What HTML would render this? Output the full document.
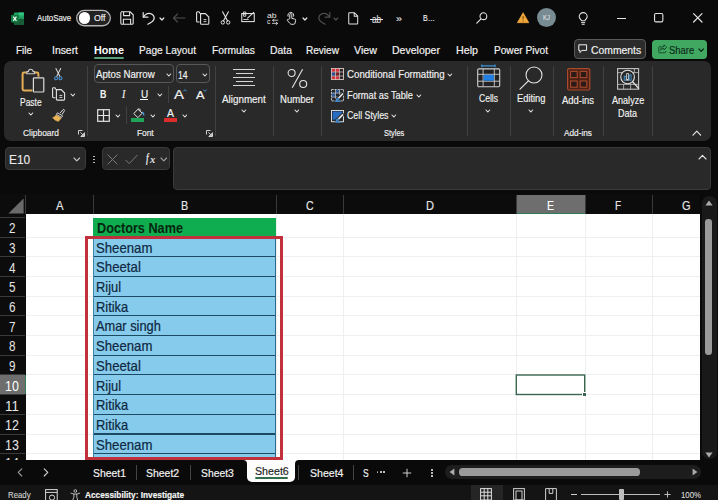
<!DOCTYPE html>
<html lang="en"><head><meta charset="utf-8"><title>Excel</title>
<style>
html,body{margin:0;padding:0;}
body{width:718px;height:500px;overflow:hidden;position:relative;background:#0a0a0a;font-family:"Liberation Sans",sans-serif;}
.t{position:absolute;white-space:nowrap;transform-origin:0 50%;display:block;}
.b{position:absolute;box-sizing:border-box;}
.i{position:absolute;overflow:visible;}
</style></head><body>
<div class="titlebar">
<svg class="i" style="left:10.9px;top:11.6px;" width="13.4" height="13.4" viewBox="0 0 14 14"><rect x="3" y="0.5" width="10.5" height="13" rx="1.2" fill="#21a366"/>
<rect x="8.2" y="0.5" width="5.3" height="3.3" fill="#33c481"/><rect x="8.2" y="3.8" width="5.3" height="3.2" fill="#21a366"/>
<rect x="3" y="3.8" width="5.2" height="3.2" fill="#107c41"/><rect x="3" y="7" width="10.5" height="6.5" rx="1.2" fill="#185c37"/>
<rect x="0" y="3" width="8" height="8" rx="1" fill="#107c41"/>
<path d="M2.3 4.8 L5.7 9.2 M5.7 4.8 L2.3 9.2" stroke="#fff" stroke-width="1.2" fill="none"/></svg>
<span class="t " style="left:36.80px;top:12.70px;font-size:8.8px;line-height:11px;color:#f2f2f2;transform:scaleX(0.8965) rotate(0.02deg);-webkit-text-stroke:0.14px #f2f2f2;">AutoSave</span>
<svg class="i" style="left:75px;top:9px;" width="37" height="18.4" viewBox="0 0 37 18.4"><rect x="1.65" y="1.45" width="33.7" height="15.3" rx="7.65" fill="#222" stroke="#b4b4b4" stroke-width="1.3"/></svg>
<div class="b " style="left:78.8px;top:12.4px;width:11.4px;height:11.4px;background:#fff;border-radius:50%;"></div>
<span class="t " style="left:93.80px;top:12.70px;font-size:8.8px;line-height:11px;color:#f2f2f2;transform:scaleX(0.9986) rotate(0.02deg);-webkit-text-stroke:0.14px #f2f2f2;">Off</span>
<svg class="i" style="left:120px;top:11px;" width="14" height="14" viewBox="0 0 14 14"><path d="M1.5 0.8 H10.2 L13.2 3.8 V12 a1.2 1.2 0 0 1 -1.2 1.2 H1.8 A1.2 1.2 0 0 1 0.8 12 V1.8 Z" fill="none" stroke="#e4e4e4" stroke-width="1.1"/><path d="M3.6 1 V4.6 H9.6 V1" fill="none" stroke="#e4e4e4" stroke-width="1.1"/><path d="M3.4 13 V8.2 H10.6 V13" fill="none" stroke="#e4e4e4" stroke-width="1.1"/></svg>
<svg class="i" style="left:142px;top:11px;" width="14" height="14" viewBox="0 0 14 14"><path d="M1.2 1.5 V6.2 H5.9" fill="none" stroke="#e4e4e4" stroke-width="1.2" stroke-linecap="round" stroke-linejoin="round"/><path d="M1.6 6 C3.2 3.2 6 2 8.6 2.6 C11.4 3.3 12.8 6 11.8 8.4 C11 10.4 8.6 11.8 5.8 13.2" fill="none" stroke="#e4e4e4" stroke-width="1.2" stroke-linecap="round"/></svg>
<svg class="i" style="left:159.3px;top:16.6px;" width="5.8" height="4" viewBox="0 0 5.8 4"><path d="M1 1 L2.9 3 L4.8 1" fill="none" stroke="#e6e6e6" stroke-width="1.2" stroke-linecap="round" stroke-linejoin="round"/></svg>
<svg class="i" style="left:172px;top:13px;" width="14" height="10" viewBox="0 0 14 10"><path d="M13 5 H1.5 M5.5 1 L1.5 5 L5.5 9" fill="none" stroke="#4e4e4e" stroke-width="1.1" stroke-linecap="round" stroke-linejoin="round"/></svg>
<svg class="i" style="left:196px;top:11px;" width="14" height="14" viewBox="0 0 14 14"><path d="M3.6 2.6 V1.8 a1 1 0 0 0 -1 -1 H1.6 a1 1 0 0 0 -1 1 V10 a1 1 0 0 0 1 1 H3.6" fill="none" stroke="#e4e4e4" stroke-width="1.1"/><path d="M4.6 2.6 H9.4 L12.8 6 V12.4 a0.9 0.9 0 0 1 -0.9 0.9 H5.5 a0.9 0.9 0 0 1 -0.9 -0.9 Z" fill="none" stroke="#e4e4e4" stroke-width="1.1"/><path d="M7.6 8.6 H10.4 M7.6 10.6 H10.4" stroke="#e4e4e4" stroke-width="0.9"/></svg>
<svg class="i" style="left:220px;top:11px;" width="11" height="14" viewBox="0 0 11 14"><path d="M2.6 0.8 L7.6 10 M8.4 0.8 L3.4 10" stroke="#e4e4e4" stroke-width="1.1" fill="none" stroke-linecap="round"/><circle cx="2.8" cy="11.4" r="1.7" fill="none" stroke="#e4e4e4" stroke-width="1"/><circle cx="8.2" cy="11.4" r="1.7" fill="none" stroke="#e4e4e4" stroke-width="1"/></svg>
<svg class="i" style="left:241.4px;top:11.4px;" width="14.4" height="11.6" viewBox="0 0 15 12"><rect x="0.8" y="2.6" width="13" height="8.4" fill="none" stroke="#e4e4e4" stroke-width="1.1"/><path d="M6.5 7.6 L13.6 1.2" stroke="#e4e4e4" stroke-width="1.1"/><path d="M2.6 1 H5 V5.4 H2.6 Z M2.6 3.2 H5" fill="none" stroke="#e4e4e4" stroke-width="0.9"/><path d="M2.4 8.8 H8" stroke="#e4e4e4" stroke-width="0.9"/></svg>
<span class="t " style="left:266.80px;top:11.70px;font-size:7px;line-height:8px;color:#e4e4e4;transform:scaleX(1.2355) rotate(0.02deg);">ab</span>
<span class="t " style="left:267.20px;top:17.65px;font-size:7px;line-height:8px;color:#e4e4e4;transform:scaleX(0.9714) rotate(0.02deg);">c</span>
<svg class="i" style="left:270.5px;top:18.5px;" width="8" height="6" viewBox="0 0 8 6"><path d="M7.2 1.2 H1.6 M3.4 0 L1.4 1.4 L3.4 2.8 M1 4.4 H6.4 M4.8 3 L6.8 4.4 L4.8 5.8" fill="none" stroke="#e4e4e4" stroke-width="0.8"/></svg>
<svg class="i" style="left:285px;top:11px;" width="12" height="14" viewBox="0 0 12 14"><path d="M4.8 7.6 V3.6 a1 1 0 0 1 2 0 V7.4 L9.6 8 a1.2 1.2 0 0 1 1 1.4 L10 12.2 a1.4 1.4 0 0 1 -1.4 1.1 H6.6 a2 2 0 0 1 -1.6 -0.8 L2.4 9.6 a0.9 0.9 0 0 1 1.3 -1.2 Z" fill="none" stroke="#e4e4e4" stroke-width="1"/><path d="M3.2 5.6 a2.9 2.9 0 1 1 5.2 0" fill="none" stroke="#e4e4e4" stroke-width="1"/></svg>
<svg class="i" style="left:302.3px;top:16.6px;" width="5.8" height="4" viewBox="0 0 5.8 4"><path d="M1 1 L2.9 3 L4.8 1" fill="none" stroke="#e6e6e6" stroke-width="1.2" stroke-linecap="round" stroke-linejoin="round"/></svg>
<svg class="i" style="left:317px;top:11px;" width="14" height="14" viewBox="0 0 14 14"><path d="M12.8 1.5 V6.2 H8.1" fill="none" stroke="#4e4e4e" stroke-width="1.2" stroke-linecap="round" stroke-linejoin="round"/><path d="M12.4 6 C10.8 3.2 8 2 5.4 2.6 C2.6 3.3 1.2 6 2.2 8.4 C3 10.4 5.4 11.8 8.2 13.2" fill="none" stroke="#4e4e4e" stroke-width="1.2" stroke-linecap="round"/></svg>
<svg class="i" style="left:333.4px;top:16.6px;" width="5.8" height="4" viewBox="0 0 5.8 4"><path d="M1 1 L2.9 3 L4.8 1" fill="none" stroke="#4e4e4e" stroke-width="1.2" stroke-linecap="round" stroke-linejoin="round"/></svg>
<svg class="i" style="left:348.2px;top:12.2px;" width="11" height="12.8" viewBox="0 0 12 14"><path d="M1.6 0.8 H7 L10.6 4.4 V12.4 a0.8 0.8 0 0 1 -0.8 0.8 H1.6 a0.8 0.8 0 0 1 -0.8 -0.8 V1.6 a0.8 0.8 0 0 1 0.8 -0.8 Z M6.8 1 V4.6 H10.4" fill="none" stroke="#e4e4e4" stroke-width="1.1"/></svg>
<span class="t " style="left:371.80px;top:13.50px;font-size:10.4px;line-height:12px;color:#e4e4e4;transform:scaleX(0.7970) rotate(0.02deg);-webkit-text-stroke:0.1px #e4e4e4;">ab</span>
<div class="b " style="left:370px;top:18.9px;width:13.2px;height:1.1px;background:#e4e4e4;"></div>
<span class="t " style="left:396.00px;top:13.60px;font-size:9px;line-height:11px;color:#e4e4e4;transform:scaleX(1.2012) rotate(0.02deg);-webkit-text-stroke:0.14px #e4e4e4;">»</span>
<span class="t " style="left:423.20px;top:12.90px;font-size:9px;line-height:11px;color:#f2f2f2;transform:scaleX(0.7875) rotate(0.02deg);-webkit-text-stroke:0.14px #f2f2f2;">B…</span>
<svg class="i" style="left:475.6px;top:12.2px;" width="12" height="12" viewBox="0 0 12 12"><circle cx="7.4" cy="4.2" r="3.4" fill="none" stroke="#e4e4e4" stroke-width="1.05"/><path d="M5 6.8 L0.8 11.2" stroke="#e4e4e4" stroke-width="1.15" stroke-linecap="round"/></svg>
<svg class="i" style="left:516.6px;top:12px;" width="12.2" height="11.6" viewBox="0 0 13 12"><path d="M6.5 0.6 L12.6 11.2 H0.4 Z" fill="#f0a63a" stroke="#f0a63a" stroke-width="0.8" stroke-linejoin="round"/><path d="M6.5 4 V7.8" stroke="#7a4a08" stroke-width="1.1"/><circle cx="6.5" cy="9.5" r="0.65" fill="#7a4a08"/></svg>
<div class="b " style="left:536.7px;top:7.9px;width:19.8px;height:19.6px;background:#788a92;border-radius:50%;"></div>
<span class="t " style="left:543.40px;top:14.00px;font-size:6.6px;line-height:8px;color:#eef2f3;transform:scaleX(0.8844) rotate(0.02deg);">KJ</span>
<svg class="i" style="left:578.2px;top:11.6px;" width="10.4" height="14" viewBox="0 0 10.4 14"><path d="M3.4 8.8 C3.2 7.4 1.2 6.6 1.2 4.6 a4 4 0 0 1 8 0 C9.2 6.6 7.2 7.4 7 8.8 Z" fill="none" stroke="#e4e4e4" stroke-width="1.05" stroke-linejoin="round"/><path d="M3.6 10.6 H6.8 M4.1 12.3 H6.3" stroke="#e4e4e4" stroke-width="1" stroke-linecap="round"/></svg>
<div class="b " style="left:616.8px;top:17.7px;width:9.0px;height:1.0px;background:#e4e4e4;"></div>
<svg class="i" style="left:653.4px;top:12.4px;" width="12" height="12" viewBox="0 0 12 12"><rect x="1.55" y="1.55" width="8.3" height="8.3" rx="1.4" fill="none" stroke="#e4e4e4" stroke-width="1.1"/></svg>
<svg class="i" style="left:693px;top:13.4px;" width="9.6" height="9.6" viewBox="0 0 9.6 9.6"><path d="M0.6 0.6 L9 9 M9 0.6 L0.6 9" stroke="#e4e4e4" stroke-width="1.2" stroke-linecap="round"/></svg>
</div>
<div class="tabs">
<span class="t " style="left:16.00px;top:44.50px;font-size:10.4px;line-height:12px;color:#f2f2f2;transform:scaleX(0.9556) rotate(0.02deg);-webkit-text-stroke:0.17px #f2f2f2;">File</span>
<span class="t " style="left:52.00px;top:44.50px;font-size:10.4px;line-height:12px;color:#f2f2f2;transform:scaleX(1.0000) rotate(0.02deg);-webkit-text-stroke:0.17px #f2f2f2;">Insert</span>
<span class="t " style="left:139.00px;top:44.50px;font-size:10.4px;line-height:12px;color:#f2f2f2;transform:scaleX(0.9761) rotate(0.02deg);-webkit-text-stroke:0.17px #f2f2f2;">Page Layout</span>
<span class="t " style="left:212.00px;top:44.50px;font-size:10.4px;line-height:12px;color:#f2f2f2;transform:scaleX(0.9915) rotate(0.02deg);-webkit-text-stroke:0.17px #f2f2f2;">Formulas</span>
<span class="t " style="left:270.00px;top:44.50px;font-size:10.4px;line-height:12px;color:#f2f2f2;transform:scaleX(1.0002) rotate(0.02deg);-webkit-text-stroke:0.17px #f2f2f2;">Data</span>
<span class="t " style="left:306.00px;top:44.50px;font-size:10.4px;line-height:12px;color:#f2f2f2;transform:scaleX(0.9674) rotate(0.02deg);-webkit-text-stroke:0.17px #f2f2f2;">Review</span>
<span class="t " style="left:354.00px;top:44.50px;font-size:10.4px;line-height:12px;color:#f2f2f2;transform:scaleX(1.0286) rotate(0.02deg);-webkit-text-stroke:0.17px #f2f2f2;">View</span>
<span class="t " style="left:392.00px;top:44.50px;font-size:10.4px;line-height:12px;color:#f2f2f2;transform:scaleX(1.0121) rotate(0.02deg);-webkit-text-stroke:0.17px #f2f2f2;">Developer</span>
<span class="t " style="left:456.00px;top:44.50px;font-size:10.4px;line-height:12px;color:#f2f2f2;transform:scaleX(1.0294) rotate(0.02deg);-webkit-text-stroke:0.17px #f2f2f2;">Help</span>
<span class="t " style="left:494.00px;top:44.50px;font-size:10.4px;line-height:12px;color:#f2f2f2;transform:scaleX(0.9733) rotate(0.02deg);-webkit-text-stroke:0.17px #f2f2f2;">Power Pivot</span>
<span class="t " style="left:94.00px;top:44.50px;font-size:10.4px;line-height:12px;font-weight:700;color:#fff;transform:scaleX(1.0376) rotate(0.02deg);">Home</span>
<div class="b " style="left:94px;top:57px;width:30px;height:1.6px;background:#5a9e78;border-radius:1px;"></div>
<div class="b " style="left:574.2px;top:39.4px;width:71.4px;height:19.6px;background:#2b2b2b;border:1px solid #5a5a5a;border-radius:4px;"></div>
<svg class="i" style="left:578px;top:44.2px;" width="9.4" height="9.6" viewBox="0 0 9.4 9.6"><path d="M0.8 0.8 H8.6 V6.4 H3.8 L2 8.6 V6.4 H0.8 Z" fill="none" stroke="#f2f2f2" stroke-width="1" stroke-linejoin="round"/></svg>
<span class="t " style="left:590.80px;top:44.60px;font-size:10.4px;line-height:12px;color:#f2f2f2;transform:scaleX(0.9983) rotate(0.02deg);-webkit-text-stroke:0.17px #f2f2f2;">Comments</span>
<div class="b " style="left:652px;top:39.6px;width:54.8px;height:19.3px;background:#41a862;border-radius:4px;"></div>
<svg class="i" style="left:657.6px;top:44.4px;" width="9.6" height="9.6" viewBox="0 0 12 12"><path d="M4.6 3.4 H2 a1 1 0 0 0 -1 1 V10 a1 1 0 0 0 1 1 H8.6 a1 1 0 0 0 1 -1 V8.8" fill="none" stroke="#0d3a1f" stroke-width="1"/><path d="M7.4 1 L11 4.2 L7.4 7.4 V5.4 C5.4 5.4 4.2 6.2 3.4 7.8 C3.6 5 5 3.2 7.4 3 Z" fill="none" stroke="#0d3a1f" stroke-width="1" stroke-linejoin="round"/></svg>
<span class="t " style="left:669.00px;top:44.60px;font-size:10.4px;line-height:12px;color:#0d2b18;transform:scaleX(0.9075) rotate(0.02deg);-webkit-text-stroke:0.17px #0d2b18;">Share</span>
<svg class="i" style="left:697.8px;top:48.15px;" width="6.4" height="4.3" viewBox="0 0 6.4 4.3"><path d="M1 1 L3.2 3.3 L5.4 1" fill="none" stroke="#0d2b18" stroke-width="1.2" stroke-linecap="round" stroke-linejoin="round"/></svg>
</div>
<div class="ribbon">
<div class="b " style="left:4px;top:61.3px;width:706.5px;height:79.7px;background:#292929;border-radius:7px;"></div>
<div class="b " style="left:87.0px;top:65.5px;width:1.0px;height:70.5px;background:#414141;"></div>
<div class="b " style="left:215.0px;top:65.5px;width:1.0px;height:70.5px;background:#414141;"></div>
<div class="b " style="left:272.5px;top:65.5px;width:1.0px;height:70.5px;background:#414141;"></div>
<div class="b " style="left:320.5px;top:65.5px;width:1.0px;height:70.5px;background:#414141;"></div>
<div class="b " style="left:466.5px;top:65.5px;width:1.0px;height:70.5px;background:#414141;"></div>
<div class="b " style="left:509.5px;top:65.5px;width:1.0px;height:70.5px;background:#414141;"></div>
<div class="b " style="left:553.0px;top:65.5px;width:1.0px;height:70.5px;background:#414141;"></div>
<div class="b " style="left:603.0px;top:65.5px;width:1.0px;height:70.5px;background:#414141;"></div>
<div class="b " style="left:651.5px;top:65.5px;width:1.0px;height:70.5px;background:#414141;"></div>
<svg class="i" style="left:21px;top:67px;" width="24" height="26" viewBox="0 0 24 26"><path d="M6 5.6 H2.9 a1.3 1.3 0 0 0 -1.3 1.3 V22.1 a1.3 1.3 0 0 0 1.3 1.3 H11.4" fill="none" stroke="#e3ad55" stroke-width="2"/>
<path d="M13.6 5.6 H16.1 a1.3 1.3 0 0 1 1.3 1.3 V9.8" fill="none" stroke="#e3ad55" stroke-width="2"/>
<path d="M5.8 6.8 V4.6 H7.4 a2.3 2.3 0 0 1 4.6 0 H13.6 V6.8 Z" fill="#292929" stroke="#c9c9c9" stroke-width="1.1" stroke-linejoin="round"/>
<rect x="12.4" y="10.8" width="10.4" height="14.2" rx="0.8" fill="#2e2e2e" stroke="#dcdcdc" stroke-width="1.2"/></svg>
<span class="t " style="left:20.20px;top:96.70px;font-size:10.2px;line-height:12px;color:#f2f2f2;transform:scaleX(0.8288) rotate(0.02deg);-webkit-text-stroke:0.16px #f2f2f2;">Paste</span>
<svg class="i" style="left:28.15px;top:112.0px;" width="5.7" height="4.0" viewBox="0 0 5.7 4.0"><path d="M1 1 L2.85 3.0 L4.7 1" fill="none" stroke="#e6e6e6" stroke-width="1.1" stroke-linecap="round" stroke-linejoin="round"/></svg>
<span class="t " style="left:23.00px;top:127.55px;font-size:9.2px;line-height:11px;color:#f2f2f2;transform:scaleX(0.9143) rotate(0.02deg);-webkit-text-stroke:0.15px #f2f2f2;">Clipboard</span>
<svg class="i" style="left:77.5px;top:129.5px;" width="7" height="7" viewBox="0 0 7 7"><path d="M0.5 4.5 V0.5 H4.5 M6.5 2.5 V6.5 H2.5" fill="none" stroke="#e4e4e4" stroke-width="0.9"/><path d="M2.4 2.4 L5.4 5.4 M5.6 3.2 V5.6 H3.2" fill="none" stroke="#e4e4e4" stroke-width="0.9"/></svg>
<svg class="i" style="left:54.2px;top:68.2px;" width="8.6" height="12.6" viewBox="0 0 9 13.2"><path d="M2 0.6 L6.2 9 M7 0.6 L2.8 9" stroke="#dcdcdc" stroke-width="1.05" fill="none" stroke-linecap="round"/><circle cx="2.2" cy="10.8" r="1.6" fill="none" stroke="#4b94d6" stroke-width="1.1"/><circle cx="6.8" cy="10.8" r="1.6" fill="none" stroke="#4b94d6" stroke-width="1.1"/></svg>
<svg class="i" style="left:51.8px;top:87.4px;" width="14" height="14" viewBox="0 0 14 14"><path d="M3.4 2.6 V1.6 a0.9 0.9 0 0 0 -0.9 -0.9 H1.5 a0.9 0.9 0 0 0 -0.9 0.9 V9.8 a0.9 0.9 0 0 0 0.9 0.9 H3.4" fill="none" stroke="#e4e4e4" stroke-width="1.1"/><path d="M4.4 2.6 H9.2 L12.6 6 V12.2 a0.9 0.9 0 0 1 -0.9 0.9 H5.3 a0.9 0.9 0 0 1 -0.9 -0.9 Z" fill="none" stroke="#e4e4e4" stroke-width="1.1"/><path d="M7.4 8.4 H10.4 M7.4 10.4 H10.4" stroke="#e4e4e4" stroke-width="0.9"/></svg>
<svg class="i" style="left:70.45px;top:93.0px;" width="5.7" height="4.0" viewBox="0 0 5.7 4.0"><path d="M1 1 L2.85 3.0 L4.7 1" fill="none" stroke="#e6e6e6" stroke-width="1.1" stroke-linecap="round" stroke-linejoin="round"/></svg>
<svg class="i" style="left:52px;top:108.6px;" width="13" height="13" viewBox="0 0 13 13"><path d="M8 4.2 L10.8 0.8 a0.9 0.9 0 0 1 1.5 1.1 L10 5.6" fill="none" stroke="#dcdcdc" stroke-width="1"/><path d="M5.4 3.8 L10.6 6.8 L9.6 8.4 L4.4 5.4 Z" fill="#292929" stroke="#dcdcdc" stroke-width="0.9" stroke-linejoin="round"/><path d="M4 6 L9.2 9 L6.6 12.2 C4.6 12.4 2.4 11 0.6 8.6 C2.2 8.4 3.2 7.4 4 6 Z" fill="#e8b458" stroke="#e8b458" stroke-width="0.6" stroke-linejoin="round"/></svg>
<div class="b " style="left:93.5px;top:64.2px;width:80.2px;height:19.1px;border:1px solid #585858;border-radius:4px;"></div>
<div class="b " style="left:176px;top:64.2px;width:33.6px;height:19.1px;border:1px solid #585858;border-radius:4px;"></div>
<span class="t " style="left:95.50px;top:68.65px;font-size:10px;line-height:12px;color:#f2f2f2;transform:scaleX(0.9686) rotate(0.02deg);-webkit-text-stroke:0.16px #f2f2f2;">Aptos Narrow</span>
<svg class="i" style="left:166.15px;top:73.0px;" width="5.7" height="4.0" viewBox="0 0 5.7 4.0"><path d="M1 1 L2.85 3.0 L4.7 1" fill="none" stroke="#e6e6e6" stroke-width="1.1" stroke-linecap="round" stroke-linejoin="round"/></svg>
<span class="t " style="left:178.20px;top:69.50px;font-size:10px;line-height:12px;color:#f2f2f2;transform:scaleX(0.8649) rotate(0.02deg);-webkit-text-stroke:0.16px #f2f2f2;">14</span>
<svg class="i" style="left:202.15px;top:73.0px;" width="5.7" height="4.0" viewBox="0 0 5.7 4.0"><path d="M1 1 L2.85 3.0 L4.7 1" fill="none" stroke="#e6e6e6" stroke-width="1.1" stroke-linecap="round" stroke-linejoin="round"/></svg>
<span class="t " style="left:100.20px;top:87.80px;font-size:11px;line-height:13px;font-weight:700;color:#f2f2f2;transform:scaleX(0.8081) rotate(0.02deg);">B</span>
<span class="t " style="left:121.65px;top:87.30px;font-size:11.5px;line-height:14px;font-style:italic;font-family:&quot;Liberation Serif&quot;,serif;color:#f2f2f2;transform:scaleX(0.8696) rotate(0.02deg);-webkit-text-stroke:0.18px #f2f2f2;">I</span>
<span class="t " style="left:140.60px;top:88.70px;font-size:10.4px;line-height:12px;color:#f2f2f2;transform:scaleX(0.9615) rotate(0.02deg);-webkit-text-stroke:0.17px #f2f2f2;">U</span>
<div class="b " style="left:140.4px;top:98.9px;width:7.6px;height:0.9px;background:#f2f2f2;"></div>
<svg class="i" style="left:157.15px;top:93.0px;" width="5.7" height="4.0" viewBox="0 0 5.7 4.0"><path d="M1 1 L2.85 3.0 L4.7 1" fill="none" stroke="#e6e6e6" stroke-width="1.1" stroke-linecap="round" stroke-linejoin="round"/></svg>
<div class="b " style="left:167.5px;top:86px;width:1.0px;height:17px;background:#414141;"></div>
<span class="t " style="left:174.00px;top:87.00px;font-size:13.4px;line-height:16px;color:#f2f2f2;transform:scaleX(1.1138) rotate(0.02deg);-webkit-text-stroke:0.21px #f2f2f2;">A</span>
<svg class="i" style="left:182.6px;top:88.6px;" width="4" height="3" viewBox="0 0 4 3"><path d="M0.4 2.4 L2 0.6 L3.6 2.4" fill="none" stroke="#4aa3e8" stroke-width="0.9"/></svg>
<span class="t " style="left:196.00px;top:88.40px;font-size:11.4px;line-height:14px;color:#f2f2f2;transform:scaleX(1.1259) rotate(0.02deg);-webkit-text-stroke:0.18px #f2f2f2;">A</span>
<svg class="i" style="left:203.2px;top:88.6px;" width="4" height="3" viewBox="0 0 4 3"><path d="M0.4 0.6 L2 2.4 L3.6 0.6" fill="none" stroke="#4aa3e8" stroke-width="0.9"/></svg>
<svg class="i" style="left:96.5px;top:109px;" width="13" height="13" viewBox="0 0 13 13"><rect x="0.7" y="0.7" width="11.6" height="11.6" fill="none" stroke="#e4e4e4" stroke-width="1.2"/><path d="M6.5 0.7 V12.3 M0.7 6.5 H12.3" stroke="#e4e4e4" stroke-width="1.2"/></svg>
<svg class="i" style="left:115.15px;top:113.8px;" width="5.7" height="4.0" viewBox="0 0 5.7 4.0"><path d="M1 1 L2.85 3.0 L4.7 1" fill="none" stroke="#e6e6e6" stroke-width="1.1" stroke-linecap="round" stroke-linejoin="round"/></svg>
<div class="b " style="left:126.3px;top:106px;width:1.0px;height:18px;background:#414141;"></div>
<svg class="i" style="left:132.6px;top:108px;" width="12" height="11" viewBox="0 0 12 11"><path d="M4.9 1.2 L9.2 5.2 L4.9 9.6 L0.8 5.6 Z" fill="none" stroke="#e4e4e4" stroke-width="1" stroke-linejoin="round"/><path d="M4.9 1.2 C6.2 0 7.6 1.2 7.2 3.2" fill="none" stroke="#e4e4e4" stroke-width="0.9"/><path d="M9.6 4.2 C10.6 5 11 6 10.8 7.2" fill="none" stroke="#4aa3e8" stroke-width="1.2" stroke-linecap="round"/></svg>
<div class="b " style="left:131.4px;top:118.4px;width:13.1px;height:3.2px;background:#22a35a;"></div>
<svg class="i" style="left:149.65px;top:113.8px;" width="5.7" height="4.0" viewBox="0 0 5.7 4.0"><path d="M1 1 L2.85 3.0 L4.7 1" fill="none" stroke="#e6e6e6" stroke-width="1.1" stroke-linecap="round" stroke-linejoin="round"/></svg>
<span class="t " style="left:167.00px;top:106.40px;font-size:11.6px;line-height:14px;color:#f2f2f2;transform:scaleX(0.9007) rotate(0.02deg);-webkit-text-stroke:0.19px #f2f2f2;">A</span>
<div class="b " style="left:163.8px;top:118.4px;width:13.0px;height:3.2px;background:#dc2c2c;"></div>
<svg class="i" style="left:182.15px;top:113.8px;" width="5.7" height="4.0" viewBox="0 0 5.7 4.0"><path d="M1 1 L2.85 3.0 L4.7 1" fill="none" stroke="#e6e6e6" stroke-width="1.1" stroke-linecap="round" stroke-linejoin="round"/></svg>
<span class="t " style="left:136.70px;top:127.55px;font-size:9.2px;line-height:11px;color:#f2f2f2;transform:scaleX(0.9076) rotate(0.02deg);-webkit-text-stroke:0.15px #f2f2f2;">Font</span>
<svg class="i" style="left:206px;top:129.5px;" width="7" height="7" viewBox="0 0 7 7"><path d="M0.5 4.5 V0.5 H4.5 M6.5 2.5 V6.5 H2.5" fill="none" stroke="#e4e4e4" stroke-width="0.9"/><path d="M2.4 2.4 L5.4 5.4 M5.6 3.2 V5.6 H3.2" fill="none" stroke="#e4e4e4" stroke-width="0.9"/></svg>
<div class="b " style="left:233px;top:68.9px;width:22px;height:1.0px;background:#d6d6d6;"></div>
<div class="b " style="left:236.2px;top:72.85px;width:16.4px;height:1.0px;background:#d6d6d6;"></div>
<div class="b " style="left:233px;top:76.8px;width:22px;height:1.0px;background:#d6d6d6;"></div>
<div class="b " style="left:236.2px;top:80.75px;width:16.4px;height:1.0px;background:#d6d6d6;"></div>
<div class="b " style="left:233px;top:84.7px;width:22px;height:1.0px;background:#d6d6d6;"></div>
<span class="t " style="left:222.00px;top:93.55px;font-size:10.2px;line-height:12px;color:#f2f2f2;transform:scaleX(0.9661) rotate(0.02deg);-webkit-text-stroke:0.16px #f2f2f2;">Alignment</span>
<svg class="i" style="left:241.15px;top:109.4px;" width="5.7" height="4.0" viewBox="0 0 5.7 4.0"><path d="M1 1 L2.85 3.0 L4.7 1" fill="none" stroke="#e6e6e6" stroke-width="1.1" stroke-linecap="round" stroke-linejoin="round"/></svg>
<svg class="i" style="left:287px;top:67.5px;" width="21" height="21" viewBox="0 0 21 21"><circle cx="4.6" cy="5" r="3.5" fill="none" stroke="#e4e4e4" stroke-width="1.1"/><circle cx="16.2" cy="16" r="3.5" fill="none" stroke="#e4e4e4" stroke-width="1.1"/><path d="M15.6 1.2 L5.2 19.8" stroke="#e4e4e4" stroke-width="1.1"/></svg>
<span class="t " style="left:280.00px;top:93.55px;font-size:10.2px;line-height:12px;color:#f2f2f2;transform:scaleX(0.9376) rotate(0.02deg);-webkit-text-stroke:0.16px #f2f2f2;">Number</span>
<svg class="i" style="left:293.75px;top:109.4px;" width="5.7" height="4.0" viewBox="0 0 5.7 4.0"><path d="M1 1 L2.85 3.0 L4.7 1" fill="none" stroke="#e6e6e6" stroke-width="1.1" stroke-linecap="round" stroke-linejoin="round"/></svg>
<svg class="i" style="left:331px;top:68px;" width="13" height="12" viewBox="0 0 13 12"><rect x="0.5" y="0.5" width="12" height="11" fill="#2a2224" stroke="#dccccc" stroke-width="0.9"/><rect x="0.9" y="0.9" width="7.4" height="2.9" fill="#d8323a"/><rect x="0.9" y="8.3" width="7.4" height="2.8" fill="#d8323a"/><rect x="0.9" y="4.3" width="3.4" height="3.5" fill="#2f4f9a"/><rect x="4.8" y="4.3" width="3.5" height="3.5" fill="#7a1f26"/><path d="M0.5 4 H12.5 M0.5 8 H12.5 M4.5 0.5 V11.5 M8.5 0.5 V11.5" stroke="#dccccc" stroke-width="0.7"/></svg>
<svg class="i" style="left:331px;top:89px;" width="13" height="13" viewBox="0 0 13 13"><rect x="0.5" y="0.5" width="12" height="11.4" fill="#23272e" stroke="#d0d0d0" stroke-width="0.9" stroke-dasharray="2.2 0.8"/><rect x="0.9" y="4.4" width="3.4" height="3.4" fill="#2c5a9c"/><rect x="4.9" y="0.9" width="3.4" height="3" fill="#2c5a9c"/><path d="M0.5 4.1 H12.5 M0.5 8.1 H8 M4.5 0.5 V11.9 M8.5 0.5 V7" stroke="#d0d0d0" stroke-width="0.7"/><path d="M5.8 10.8 L11.6 5" stroke="#292929" stroke-width="3.6" stroke-linecap="round"/><path d="M5.8 10.8 L11.6 5" stroke="#e4e4e4" stroke-width="1.7" stroke-linecap="round"/><path d="M5.8 10.8 l1.3 -1.3" stroke="#3a8ad8" stroke-width="1.9" stroke-linecap="round"/><path d="M4.2 12.3 H9.6" stroke="#3a8ad8" stroke-width="1.3"/></svg>
<svg class="i" style="left:331px;top:110px;" width="13" height="13" viewBox="0 0 13 13"><rect x="0.5" y="0.5" width="12" height="11.2" fill="#23272e" stroke="#d8d8d8" stroke-width="1"/><path d="M1.6 1.6 H11.2 V3.6 L5 9.8 H1.6 Z" fill="#2a6dc0"/><path d="M5.8 10.6 L11.6 4.8" stroke="#292929" stroke-width="3.6" stroke-linecap="round"/><path d="M5.8 10.6 L11.6 4.8" stroke="#e4e4e4" stroke-width="1.7" stroke-linecap="round"/><path d="M5.8 10.6 l1.3 -1.3" stroke="#3a8ad8" stroke-width="1.9" stroke-linecap="round"/><path d="M4.2 12.1 H9.6" stroke="#3a8ad8" stroke-width="1.3"/></svg>
<span class="t " style="left:347.00px;top:68.55px;font-size:10.2px;line-height:12px;color:#f2f2f2;transform:scaleX(0.9521) rotate(0.02deg);-webkit-text-stroke:0.16px #f2f2f2;">Conditional Formatting</span>
<svg class="i" style="left:447.15px;top:73.0px;" width="5.7" height="4.0" viewBox="0 0 5.7 4.0"><path d="M1 1 L2.85 3.0 L4.7 1" fill="none" stroke="#e6e6e6" stroke-width="1.1" stroke-linecap="round" stroke-linejoin="round"/></svg>
<span class="t " style="left:347.00px;top:89.50px;font-size:10.2px;line-height:12px;color:#f2f2f2;transform:scaleX(0.9050) rotate(0.02deg);-webkit-text-stroke:0.16px #f2f2f2;">Format as Table</span>
<svg class="i" style="left:415.75px;top:93.6px;" width="5.7" height="4.0" viewBox="0 0 5.7 4.0"><path d="M1 1 L2.85 3.0 L4.7 1" fill="none" stroke="#e6e6e6" stroke-width="1.1" stroke-linecap="round" stroke-linejoin="round"/></svg>
<span class="t " style="left:347.00px;top:109.50px;font-size:10.2px;line-height:12px;color:#f2f2f2;transform:scaleX(0.8611) rotate(0.02deg);-webkit-text-stroke:0.16px #f2f2f2;">Cell Styles</span>
<svg class="i" style="left:391.15px;top:114.0px;" width="5.7" height="4.0" viewBox="0 0 5.7 4.0"><path d="M1 1 L2.85 3.0 L4.7 1" fill="none" stroke="#e6e6e6" stroke-width="1.1" stroke-linecap="round" stroke-linejoin="round"/></svg>
<span class="t " style="left:383.70px;top:127.50px;font-size:9.2px;line-height:11px;color:#f2f2f2;transform:scaleX(0.8097) rotate(0.02deg);-webkit-text-stroke:0.15px #f2f2f2;">Styles</span>
<svg class="i" style="left:477px;top:64px;" width="24" height="24" viewBox="0 0 24 24"><path d="M4.7 1.8 H18 M4.7 0.4 V3.2 M18 0.4 V3.2" stroke="#3f93dc" stroke-width="1.2"/><rect x="0.7" y="4.9" width="22" height="17.8" rx="1.2" fill="#222" stroke="#cfcfcf" stroke-width="1.1"/><path d="M0.7 10.3 H22.7 M0.7 17.2 H22.7 M6.1 4.9 V22.7 M17.3 4.9 V22.7" stroke="#cfcfcf" stroke-width="0.9"/><rect x="6.6" y="10.8" width="10.2" height="5.9" fill="#1f7fe4"/></svg>
<span class="t " style="left:479.00px;top:92.70px;font-size:10.2px;line-height:12px;color:#f2f2f2;transform:scaleX(0.8372) rotate(0.02deg);-webkit-text-stroke:0.16px #f2f2f2;">Cells</span>
<svg class="i" style="left:485.15px;top:109.4px;" width="5.7" height="4.0" viewBox="0 0 5.7 4.0"><path d="M1 1 L2.85 3.0 L4.7 1" fill="none" stroke="#e6e6e6" stroke-width="1.1" stroke-linecap="round" stroke-linejoin="round"/></svg>
<svg class="i" style="left:518px;top:65px;" width="26" height="26" viewBox="0 0 26 26"><circle cx="16" cy="10" r="8" fill="none" stroke="#e4e4e4" stroke-width="1.1"/><path d="M10.4 15.8 L2 24.2" stroke="#e4e4e4" stroke-width="1.2" stroke-linecap="round"/></svg>
<span class="t " style="left:517.00px;top:92.55px;font-size:10.2px;line-height:12px;color:#f2f2f2;transform:scaleX(0.9131) rotate(0.02deg);-webkit-text-stroke:0.16px #f2f2f2;">Editing</span>
<svg class="i" style="left:528.15px;top:109.4px;" width="5.7" height="4.0" viewBox="0 0 5.7 4.0"><path d="M1 1 L2.85 3.0 L4.7 1" fill="none" stroke="#e6e6e6" stroke-width="1.1" stroke-linecap="round" stroke-linejoin="round"/></svg>
<svg class="i" style="left:567px;top:67.6px;" width="23.4" height="22.6" viewBox="0 0 23.4 22.6"><rect x="0.6" y="0.6" width="22.2" height="21.4" rx="1.4" fill="#4d2114" stroke="#a94a2d" stroke-width="1.2"/><rect x="3.6" y="3.4" width="6.6" height="6.2" fill="#2b1a15" stroke="#a94a2d" stroke-width="1.1"/><rect x="13.2" y="3.4" width="6.6" height="6.2" fill="#2b1a15" stroke="#a94a2d" stroke-width="1.1"/><rect x="3.6" y="13" width="6.6" height="6.2" fill="#2b1a15" stroke="#a94a2d" stroke-width="1.1"/><rect x="13.2" y="13" width="6.6" height="6.2" fill="#2b1a15" stroke="#a94a2d" stroke-width="1.1"/></svg>
<span class="t " style="left:562.00px;top:94.60px;font-size:10.2px;line-height:12px;color:#f2f2f2;transform:scaleX(0.9254) rotate(0.02deg);-webkit-text-stroke:0.16px #f2f2f2;">Add-ins</span>
<span class="t " style="left:564.00px;top:127.50px;font-size:9.2px;line-height:11px;color:#f2f2f2;transform:scaleX(0.8978) rotate(0.02deg);-webkit-text-stroke:0.15px #f2f2f2;">Add-ins</span>
<svg class="i" style="left:616.5px;top:67.8px;" width="22.4" height="22" viewBox="0 0 22.4 22"><rect x="0.6" y="0.6" width="21" height="20.6" fill="none" stroke="#c4c4c4" stroke-width="1.1"/><path d="M0.6 4.6 H21.6 M0.6 16.4 H21.6 M6.6 16.4 V21.2 M13.6 16.4 V21.2 M17.4 0.6 V4.6" stroke="#c4c4c4" stroke-width="0.8"/><circle cx="10.6" cy="9" r="6.8" fill="#292929" stroke="#e0e0e0" stroke-width="1.1"/><path d="M15.6 13.8 L22 20.8" stroke="#e0e0e0" stroke-width="1.3"/><rect x="7.2" y="8.2" width="1.9" height="4" fill="none" stroke="#4aa3e8" stroke-width="0.8"/><rect x="9.7" y="5.6" width="1.9" height="6.6" fill="none" stroke="#e0e0e0" stroke-width="0.8"/><rect x="12.2" y="7" width="1.9" height="5.2" fill="none" stroke="#4aa3e8" stroke-width="0.8"/></svg>
<span class="t " style="left:611.50px;top:94.50px;font-size:10.2px;line-height:12px;color:#f2f2f2;transform:scaleX(0.8895) rotate(0.02deg);-webkit-text-stroke:0.16px #f2f2f2;">Analyze</span>
<span class="t " style="left:618.00px;top:107.70px;font-size:10.2px;line-height:12px;color:#f2f2f2;transform:scaleX(0.8807) rotate(0.02deg);-webkit-text-stroke:0.16px #f2f2f2;">Data</span>
<svg class="i" style="left:691.8px;top:129.8px;" width="10" height="6" viewBox="0 0 10 6"><path d="M1 5.2 L4.8 1.2 L8.6 5.2" fill="none" stroke="#e4e4e4" stroke-width="1.2" stroke-linecap="round" stroke-linejoin="round"/></svg>
</div>
<div class="formulabar">
<div class="b " style="left:5px;top:147px;width:80.5px;height:23px;background:#292929;border:1px solid #3a3a3a;border-radius:4px;"></div>
<span class="t " style="left:9.40px;top:151.50px;font-size:12.8px;line-height:15px;color:#ececec;transform:scaleX(0.9305) rotate(0.02deg);-webkit-text-stroke:0.12px #ececec;">E10</span>
<svg class="i" style="left:72.8px;top:156.8px;" width="7.6" height="4.8" viewBox="0 0 7.6 4.8"><path d="M1 1 L3.8 3.8 L6.6 1" fill="none" stroke="#c8c8c8" stroke-width="1.1" stroke-linecap="round" stroke-linejoin="round"/></svg>
<div class="b " style="left:93.4px;top:155.54999999999998px;width:1.3px;height:1.3px;background:#b8b8b8;"></div>
<div class="b " style="left:93.4px;top:158.54999999999998px;width:1.3px;height:1.3px;background:#b8b8b8;"></div>
<div class="b " style="left:93.4px;top:161.54999999999998px;width:1.3px;height:1.3px;background:#b8b8b8;"></div>
<div class="b " style="left:101.7px;top:147px;width:68.3px;height:23px;background:#292929;border:1px solid #3a3a3a;border-radius:4px;"></div>
<svg class="i" style="left:106.6px;top:153.6px;" width="11" height="11" viewBox="0 0 11 11"><path d="M0.6 0.6 L10.4 10.4 M10.4 0.6 L0.6 10.4" stroke="#7a7a7a" stroke-width="1"/></svg>
<svg class="i" style="left:124.6px;top:153.6px;" width="13" height="11" viewBox="0 0 13 11"><path d="M0.6 6 L4.2 9.6 L12.4 1" fill="none" stroke="#7a7a7a" stroke-width="1"/></svg>
<span class="t " style="left:146.00px;top:151.40px;font-size:12px;line-height:14px;font-weight:700;font-style:italic;font-family:&quot;Liberation Serif&quot;,serif;color:#e0e0e0;transform:scaleX(0.7143) rotate(0.02deg);">f</span>
<span class="t " style="left:149.76px;top:153.60px;font-size:10px;line-height:12px;font-weight:700;font-style:italic;font-family:&quot;Liberation Serif&quot;,serif;color:#e0e0e0;transform:scaleX(1.0485) rotate(0.02deg);">x</span>
<svg class="i" style="left:160.2px;top:156.8px;" width="7.6" height="4.8" viewBox="0 0 7.6 4.8"><path d="M1 1 L3.8 3.8 L6.6 1" fill="none" stroke="#a0a0a0" stroke-width="1.1" stroke-linecap="round" stroke-linejoin="round"/></svg>
<div class="b " style="left:173px;top:147px;width:537.6px;height:42.7px;background:#292929;border:1px solid #3a3a3a;border-radius:4px;"></div>
<svg class="i" style="left:698px;top:154px;" width="9" height="6" viewBox="0 0 9 6"><path d="M1 5 L4.5 1.4 L8 5" fill="none" stroke="#e4e4e4" stroke-width="1.1" stroke-linecap="round" stroke-linejoin="round"/></svg>
</div>
<div class="grid">
<div class="b " style="left:25.5px;top:213.8px;width:674.8px;height:246.2px;background:#fff;"></div>
<div class="b " style="left:92.8px;top:213.8px;width:1.0px;height:246.2px;background:#efefef;"></div>
<div class="b " style="left:275.5px;top:213.8px;width:1.0px;height:246.2px;background:#efefef;"></div>
<div class="b " style="left:342.5px;top:213.8px;width:1.0px;height:246.2px;background:#efefef;"></div>
<div class="b " style="left:515.5px;top:213.8px;width:1.0px;height:246.2px;background:#efefef;"></div>
<div class="b " style="left:584.5px;top:213.8px;width:1.0px;height:246.2px;background:#efefef;"></div>
<div class="b " style="left:652.0px;top:213.8px;width:1.0px;height:246.2px;background:#efefef;"></div>
<div class="b " style="left:25.5px;top:236.5px;width:674.8px;height:1.0px;background:#efefef;"></div>
<div class="b " style="left:25.5px;top:256.2px;width:674.8px;height:1.0px;background:#efefef;"></div>
<div class="b " style="left:25.5px;top:275.9px;width:674.8px;height:1.0px;background:#efefef;"></div>
<div class="b " style="left:25.5px;top:295.6px;width:674.8px;height:1.0px;background:#efefef;"></div>
<div class="b " style="left:25.5px;top:315.3px;width:674.8px;height:1.0px;background:#efefef;"></div>
<div class="b " style="left:25.5px;top:335.0px;width:674.8px;height:1.0px;background:#efefef;"></div>
<div class="b " style="left:25.5px;top:354.7px;width:674.8px;height:1.0px;background:#efefef;"></div>
<div class="b " style="left:25.5px;top:374.4px;width:674.8px;height:1.0px;background:#efefef;"></div>
<div class="b " style="left:25.5px;top:394.1px;width:674.8px;height:1.0px;background:#efefef;"></div>
<div class="b " style="left:25.5px;top:413.8px;width:674.8px;height:1.0px;background:#efefef;"></div>
<div class="b " style="left:25.5px;top:433.5px;width:674.8px;height:1.0px;background:#efefef;"></div>
<div class="b " style="left:25.5px;top:453.2px;width:674.8px;height:1.0px;background:#efefef;"></div>
<div class="b " style="left:0px;top:193.8px;width:700.3px;height:20.0px;background:#0c0c0c;"></div>
<div class="b " style="left:516px;top:195px;width:68.8px;height:18.8px;background:#6e6e6e;border-bottom:1.6px solid #2f7d57;"></div>
<div class="b " style="left:25.0px;top:194.8px;width:1.0px;height:19.0px;background:#3a3a3a;"></div>
<div class="b " style="left:92.8px;top:194.8px;width:1.0px;height:19.0px;background:#3a3a3a;"></div>
<div class="b " style="left:275.5px;top:194.8px;width:1.0px;height:19.0px;background:#3a3a3a;"></div>
<div class="b " style="left:342.5px;top:194.8px;width:1.0px;height:19.0px;background:#3a3a3a;"></div>
<div class="b " style="left:515.5px;top:194.8px;width:1.0px;height:19.0px;background:#3a3a3a;"></div>
<div class="b " style="left:584.5px;top:194.8px;width:1.0px;height:19.0px;background:#3a3a3a;"></div>
<div class="b " style="left:652.0px;top:194.8px;width:1.0px;height:19.0px;background:#3a3a3a;"></div>
<svg class="i" style="left:8.4px;top:197.6px;" width="16" height="15.6" viewBox="0 0 16 15.6"><path d="M15.6 0.4 V15.4 H0.4 Z" fill="#6a6a6a"/></svg>
<span class="t " style="left:55.60px;top:197.50px;font-size:13.6px;line-height:16px;color:#e6e6e6;transform:scaleX(0.8341) rotate(0.02deg);-webkit-text-stroke:0.15px #e6e6e6;">A</span>
<span class="t " style="left:181.00px;top:197.50px;font-size:13.6px;line-height:16px;color:#e6e6e6;transform:scaleX(0.7961) rotate(0.02deg);-webkit-text-stroke:0.15px #e6e6e6;">B</span>
<span class="t " style="left:306.00px;top:197.50px;font-size:13.6px;line-height:16px;color:#e6e6e6;transform:scaleX(0.7761) rotate(0.02deg);-webkit-text-stroke:0.15px #e6e6e6;">C</span>
<span class="t " style="left:425.60px;top:197.50px;font-size:13.6px;line-height:16px;color:#e6e6e6;transform:scaleX(0.8170) rotate(0.02deg);-webkit-text-stroke:0.15px #e6e6e6;">D</span>
<span class="t " style="left:547.00px;top:197.50px;font-size:13.6px;line-height:16px;color:#fff;transform:scaleX(0.7740) rotate(0.02deg);-webkit-text-stroke:0.15px #fff;">E</span>
<span class="t " style="left:615.40px;top:197.50px;font-size:13.6px;line-height:16px;color:#e6e6e6;transform:scaleX(0.7473) rotate(0.02deg);-webkit-text-stroke:0.15px #e6e6e6;">F</span>
<span class="t " style="left:682.40px;top:197.50px;font-size:13.6px;line-height:16px;color:#e6e6e6;transform:scaleX(0.8107) rotate(0.02deg);-webkit-text-stroke:0.15px #e6e6e6;">G</span>
<div class="b " style="left:0px;top:213.8px;width:25.5px;height:246.2px;background:#0c0c0c;"></div>
<div class="b " style="left:0px;top:375.4px;width:25.5px;height:19.0px;background:#6e6e6e;border-right:1.6px solid #2f7d57;"></div>
<div class="b " style="left:0px;top:217.4px;width:25px;height:1.0px;background:#3a3a3a;"></div>
<div class="b " style="left:0px;top:236.5px;width:25px;height:1.0px;background:#3a3a3a;"></div>
<div class="b " style="left:0px;top:256.2px;width:25px;height:1.0px;background:#3a3a3a;"></div>
<div class="b " style="left:0px;top:275.9px;width:25px;height:1.0px;background:#3a3a3a;"></div>
<div class="b " style="left:0px;top:295.6px;width:25px;height:1.0px;background:#3a3a3a;"></div>
<div class="b " style="left:0px;top:315.3px;width:25px;height:1.0px;background:#3a3a3a;"></div>
<div class="b " style="left:0px;top:335.0px;width:25px;height:1.0px;background:#3a3a3a;"></div>
<div class="b " style="left:0px;top:354.7px;width:25px;height:1.0px;background:#3a3a3a;"></div>
<div class="b " style="left:0px;top:374.4px;width:25px;height:1.0px;background:#3a3a3a;"></div>
<div class="b " style="left:0px;top:394.1px;width:25px;height:1.0px;background:#3a3a3a;"></div>
<div class="b " style="left:0px;top:413.8px;width:25px;height:1.0px;background:#3a3a3a;"></div>
<div class="b " style="left:0px;top:433.5px;width:25px;height:1.0px;background:#3a3a3a;"></div>
<div class="b " style="left:0px;top:453.2px;width:25px;height:1.0px;background:#3a3a3a;"></div>
<span class="t " style="left:8.70px;top:219.60px;font-size:14px;line-height:17px;color:#e6e6e6;transform:scaleX(0.8366) rotate(0.02deg);">2</span>
<span class="t " style="left:8.70px;top:239.70px;font-size:14px;line-height:17px;color:#e6e6e6;transform:scaleX(0.8366) rotate(0.02deg);">3</span>
<span class="t " style="left:8.70px;top:259.65px;font-size:14px;line-height:17px;color:#e6e6e6;transform:scaleX(0.8366) rotate(0.02deg);">4</span>
<span class="t " style="left:8.70px;top:278.85px;font-size:14px;line-height:17px;color:#e6e6e6;transform:scaleX(0.8366) rotate(0.02deg);">5</span>
<span class="t " style="left:8.70px;top:298.55px;font-size:14px;line-height:17px;color:#e6e6e6;transform:scaleX(0.8366) rotate(0.02deg);">6</span>
<span class="t " style="left:8.70px;top:318.50px;font-size:14px;line-height:17px;color:#e6e6e6;transform:scaleX(0.8366) rotate(0.02deg);">7</span>
<span class="t " style="left:8.70px;top:337.95px;font-size:14px;line-height:17px;color:#e6e6e6;transform:scaleX(0.8366) rotate(0.02deg);">8</span>
<span class="t " style="left:8.70px;top:357.65px;font-size:14px;line-height:17px;color:#e6e6e6;transform:scaleX(0.8366) rotate(0.02deg);">9</span>
<span class="t " style="left:5.00px;top:377.60px;font-size:14px;line-height:17px;color:#fff;transform:scaleX(0.8880) rotate(0.02deg);">10</span>
<span class="t " style="left:5.00px;top:397.55px;font-size:14px;line-height:17px;color:#e6e6e6;transform:scaleX(0.9478) rotate(0.02deg);">11</span>
<span class="t " style="left:5.00px;top:416.75px;font-size:14px;line-height:17px;color:#e6e6e6;transform:scaleX(0.8880) rotate(0.02deg);">12</span>
<span class="t " style="left:5.00px;top:436.70px;font-size:14px;line-height:17px;color:#e6e6e6;transform:scaleX(0.8880) rotate(0.02deg);">13</span>
<span class="t " style="left:5.00px;top:454.90px;font-size:14px;line-height:17px;color:#e6e6e6;transform:scaleX(0.8880) rotate(0.02deg);">14</span>
<div class="b " style="left:93.4px;top:217.5px;width:182.6px;height:18.9px;background:#10ad50;"></div>
<span class="t " style="left:97.00px;top:219.20px;font-size:14.6px;line-height:18px;font-weight:700;color:#06260f;transform:scaleX(0.8688) rotate(0.02deg);">Doctors Name</span>
<div class="b " style="left:93.6px;top:238.6px;width:182.4px;height:218.7px;background:#86cbec;"></div>
<div class="b " style="left:93.6px;top:256.15px;width:182.4px;height:1.1px;background:#1c4a63;"></div>
<div class="b " style="left:93.6px;top:275.84999999999997px;width:182.4px;height:1.1px;background:#1c4a63;"></div>
<div class="b " style="left:93.6px;top:295.55px;width:182.4px;height:1.1px;background:#1c4a63;"></div>
<div class="b " style="left:93.6px;top:315.25px;width:182.4px;height:1.1px;background:#1c4a63;"></div>
<div class="b " style="left:93.6px;top:334.95px;width:182.4px;height:1.1px;background:#1c4a63;"></div>
<div class="b " style="left:93.6px;top:354.65px;width:182.4px;height:1.1px;background:#1c4a63;"></div>
<div class="b " style="left:93.6px;top:374.34999999999997px;width:182.4px;height:1.1px;background:#1c4a63;"></div>
<div class="b " style="left:93.6px;top:394.05px;width:182.4px;height:1.1px;background:#1c4a63;"></div>
<div class="b " style="left:93.6px;top:413.75px;width:182.4px;height:1.1px;background:#1c4a63;"></div>
<div class="b " style="left:93.6px;top:433.45px;width:182.4px;height:1.1px;background:#1c4a63;"></div>
<div class="b " style="left:93.6px;top:453.15px;width:182.4px;height:1.1px;background:#1c4a63;"></div>
<div class="b " style="left:93.2px;top:238.4px;width:1.0px;height:218.9px;background:#3f86a8;"></div>
<div class="b " style="left:275.4px;top:238.4px;width:1.0px;height:218.9px;background:#2a6b8c;"></div>
<span class="t " style="left:96.00px;top:238.65px;font-size:15px;line-height:18px;color:#0e2841;transform:scaleX(0.8785) rotate(0.02deg);-webkit-text-stroke:0.22px #0e2841;">Sheenam</span>
<span class="t " style="left:96.00px;top:258.35px;font-size:15px;line-height:18px;color:#0e2841;transform:scaleX(0.8810) rotate(0.02deg);-webkit-text-stroke:0.22px #0e2841;">Sheetal</span>
<span class="t " style="left:96.00px;top:278.05px;font-size:15px;line-height:18px;color:#0e2841;transform:scaleX(0.8569) rotate(0.02deg);-webkit-text-stroke:0.22px #0e2841;">Rijul</span>
<span class="t " style="left:96.00px;top:297.75px;font-size:15px;line-height:18px;color:#0e2841;transform:scaleX(0.8596) rotate(0.02deg);-webkit-text-stroke:0.22px #0e2841;">Ritika</span>
<span class="t " style="left:96.00px;top:317.45px;font-size:15px;line-height:18px;color:#0e2841;transform:scaleX(0.8551) rotate(0.02deg);-webkit-text-stroke:0.22px #0e2841;">Amar singh</span>
<span class="t " style="left:96.00px;top:337.15px;font-size:15px;line-height:18px;color:#0e2841;transform:scaleX(0.8785) rotate(0.02deg);-webkit-text-stroke:0.22px #0e2841;">Sheenam</span>
<span class="t " style="left:96.00px;top:356.85px;font-size:15px;line-height:18px;color:#0e2841;transform:scaleX(0.8810) rotate(0.02deg);-webkit-text-stroke:0.22px #0e2841;">Sheetal</span>
<span class="t " style="left:96.00px;top:376.55px;font-size:15px;line-height:18px;color:#0e2841;transform:scaleX(0.8569) rotate(0.02deg);-webkit-text-stroke:0.22px #0e2841;">Rijul</span>
<span class="t " style="left:96.00px;top:396.25px;font-size:15px;line-height:18px;color:#0e2841;transform:scaleX(0.8596) rotate(0.02deg);-webkit-text-stroke:0.22px #0e2841;">Ritika</span>
<span class="t " style="left:96.00px;top:415.95px;font-size:15px;line-height:18px;color:#0e2841;transform:scaleX(0.8596) rotate(0.02deg);-webkit-text-stroke:0.22px #0e2841;">Ritika</span>
<span class="t " style="left:96.00px;top:435.65px;font-size:15px;line-height:18px;color:#0e2841;transform:scaleX(0.8785) rotate(0.02deg);-webkit-text-stroke:0.22px #0e2841;">Sheenam</span>
<div class="b " style="left:85px;top:235.8px;width:198px;height:224.2px;border:3px solid #c0313b;"></div>
<svg class="i" style="left:514px;top:373px;" width="73" height="24" viewBox="0 0 73 24"><rect x="2.3" y="2" width="68.4" height="19.5" fill="none" stroke="#3a6650" stroke-width="1.4"/></svg>
<div class="b " style="left:582.2px;top:392px;width:4.2px;height:4.2px;background:#fff;"></div>
<div class="b " style="left:582.9px;top:392.7px;width:3.1px;height:3.2px;background:#3a6650;"></div>
<div class="b " style="left:700.3px;top:193.8px;width:17.7px;height:266.2px;background:#0a0a0a;"></div>
<div class="b " style="left:702px;top:196px;width:14.5px;height:263px;background:#191919;border-radius:7px;"></div>
<svg class="i" style="left:704.5px;top:199.5px;" width="8" height="6" viewBox="0 0 8 6"><path d="M4 0.6 L7.6 5.4 H0.4 Z" fill="#ababab"/></svg>
<div class="b " style="left:705.4px;top:218.8px;width:6.6px;height:136.6px;background:#9a9a9a;border-radius:3.3px;"></div>
<svg class="i" style="left:704.5px;top:451.5px;" width="8" height="6" viewBox="0 0 8 6"><path d="M4 5.4 L7.6 0.6 H0.4 Z" fill="#ababab"/></svg>
</div>
<div class="sheettabs">
<div class="b " style="left:240px;top:460px;width:60px;height:5px;background:#fff;"></div>
<div class="b " style="left:240px;top:465px;width:60px;height:19.5px;background:#0a0a0a;"></div>
<div class="b " style="left:0px;top:460px;width:247.3px;height:24.5px;background:#0a0a0a;border-top-right-radius:4px;"></div>
<div class="b " style="left:295.4px;top:460px;width:422.6px;height:24.5px;background:#0a0a0a;border-top-left-radius:4px;"></div>
<svg class="i" style="left:16.6px;top:467.8px;" width="6" height="9" viewBox="0 0 6 9"><path d="M4.8 0.8 L1.2 4.4 L4.8 8" fill="none" stroke="#9c9c9c" stroke-width="1.1" stroke-linecap="round" stroke-linejoin="round"/></svg>
<svg class="i" style="left:42.6px;top:467.8px;" width="6" height="9" viewBox="0 0 6 9"><path d="M1.2 0.8 L4.8 4.4 L1.2 8" fill="none" stroke="#d4d4d4" stroke-width="1.1" stroke-linecap="round" stroke-linejoin="round"/></svg>
<span class="t " style="left:93.00px;top:466.00px;font-size:11.4px;line-height:14px;color:#f2f2f2;transform:scaleX(0.9132) rotate(0.02deg);-webkit-text-stroke:0.18px #f2f2f2;">Sheet1</span>
<span class="t " style="left:146.40px;top:466.00px;font-size:11.4px;line-height:14px;color:#f2f2f2;transform:scaleX(0.9187) rotate(0.02deg);-webkit-text-stroke:0.18px #f2f2f2;">Sheet2</span>
<span class="t " style="left:200.70px;top:466.00px;font-size:11.4px;line-height:14px;color:#f2f2f2;transform:scaleX(0.9076) rotate(0.02deg);-webkit-text-stroke:0.18px #f2f2f2;">Sheet3</span>
<span class="t " style="left:309.50px;top:466.00px;font-size:11.4px;line-height:14px;color:#f2f2f2;transform:scaleX(0.9270) rotate(0.02deg);-webkit-text-stroke:0.18px #f2f2f2;">Sheet4</span>
<span class="t " style="left:363.40px;top:466.00px;font-size:11.4px;line-height:14px;color:#f2f2f2;transform:scaleX(0.7387) rotate(0.02deg);-webkit-text-stroke:0.18px #f2f2f2;">S</span>
<div class="b " style="left:135.5px;top:465px;width:1.0px;height:15px;background:#444;"></div>
<div class="b " style="left:189.5px;top:465px;width:1.0px;height:15px;background:#444;"></div>
<div class="b " style="left:298.3px;top:465px;width:1.0px;height:15px;background:#444;"></div>
<div class="b " style="left:352.5px;top:465px;width:1.0px;height:15px;background:#444;"></div>
<div class="b " style="left:247.3px;top:459.5px;width:48.1px;height:22.9px;background:#fff;border-radius:0 0 5px 5px;"></div>
<span class="t " style="left:254.60px;top:463.60px;font-size:11.4px;line-height:14px;color:#1f1f1f;transform:scaleX(0.9353) rotate(0.02deg);-webkit-text-stroke:0.18px #1f1f1f;">Sheet6</span>
<div class="b " style="left:254.6px;top:477.3px;width:33.8px;height:2.2px;background:#2f6e4f;border-radius:1px;"></div>
<div class="b " style="left:376.8px;top:471.4px;width:1.6px;height:1.5px;background:#e0e0e0;border-radius:50%;"></div>
<div class="b " style="left:380.0px;top:471.4px;width:1.6px;height:1.5px;background:#e0e0e0;border-radius:50%;"></div>
<div class="b " style="left:383.2px;top:471.4px;width:1.6px;height:1.5px;background:#e0e0e0;border-radius:50%;"></div>
<svg class="i" style="left:401.5px;top:467.5px;" width="10" height="10" viewBox="0 0 10 10"><path d="M5 0.8 V9.2 M0.8 5 H9.2" stroke="#cfcfcf" stroke-width="1"/></svg>
<div class="b " style="left:431.2px;top:469.0px;width:1.6px;height:1.6px;background:#e0e0e0;border-radius:50%;"></div>
<div class="b " style="left:431.2px;top:472.2px;width:1.6px;height:1.6px;background:#e0e0e0;border-radius:50%;"></div>
<div class="b " style="left:431.2px;top:475.4px;width:1.6px;height:1.6px;background:#e0e0e0;border-radius:50%;"></div>
<div class="b " style="left:444.6px;top:465px;width:256.4px;height:13.7px;background:#1d1d1d;border-radius:7px;"></div>
<svg class="i" style="left:448.5px;top:468px;" width="6" height="8" viewBox="0 0 6 8"><path d="M0.6 4 L5.4 0.4 V7.6 Z" fill="#ababab"/></svg>
<svg class="i" style="left:691.5px;top:468px;" width="6" height="8" viewBox="0 0 6 8"><path d="M5.4 4 L0.6 0.4 V7.6 Z" fill="#ababab"/></svg>
<div class="b " style="left:458.6px;top:468.3px;width:181.9px;height:7.3px;background:#9a9a9a;border-radius:3.6px;"></div>
</div>
<div class="statusbar">
<div class="b " style="left:0px;top:484.5px;width:718px;height:15.5px;background:#141414;"></div>
<span class="t " style="left:7.80px;top:489.50px;font-size:9.2px;line-height:11px;color:#d4d4d4;transform:scaleX(0.8500) rotate(0.02deg);-webkit-text-stroke:0.1px #d4d4d4;">Ready</span>
<svg class="i" style="left:45px;top:489.2px;" width="13" height="12" viewBox="0 0 13 12"><rect x="0.6" y="0.6" width="11.6" height="11.4" fill="none" stroke="#d8d8d8" stroke-width="1"/><path d="M0.6 3.4 H12.2" stroke="#d8d8d8" stroke-width="1"/><circle cx="7" cy="8.6" r="2.6" fill="none" stroke="#d8d8d8" stroke-width="1"/></svg>
<svg class="i" style="left:69.8px;top:488.6px;" width="11.4" height="11.8" viewBox="0 0 12 13"><circle cx="5.6" cy="2.2" r="1.5" fill="none" stroke="#d8d8d8" stroke-width="0.9"/><path d="M0.8 4.6 L4 5.6 H7.2 L10.4 4.6 M4 5.6 V9 L2.6 12.6 M7.2 5.6 V9 L8.4 12.6" fill="none" stroke="#d8d8d8" stroke-width="0.9" stroke-linecap="round"/></svg>
<span class="t " style="left:84.60px;top:489.50px;font-size:9.2px;line-height:11px;font-weight:700;color:#f6f6f6;transform:scaleX(0.9023) rotate(0.02deg);-webkit-text-stroke:0.15px #f6f6f6;">Accessibility: Investigate</span>
<div class="b " style="left:471px;top:485px;width:31.6px;height:15px;background:#252525;"></div>
<svg class="i" style="left:480px;top:488px;" width="12" height="12" viewBox="0 0 12 12"><rect x="0.6" y="0.6" width="10.8" height="11.4" fill="none" stroke="#e0e0e0" stroke-width="1"/><path d="M0.6 4.2 H11.4 M0.6 7.8 H11.4 M4.2 0.6 V12 M7.8 0.6 V12" stroke="#e0e0e0" stroke-width="1"/></svg>
<svg class="i" style="left:513px;top:488px;" width="12" height="12" viewBox="0 0 12 12"><rect x="0.6" y="0.6" width="10.8" height="11.4" fill="none" stroke="#d0d0d0" stroke-width="1"/><rect x="3" y="3" width="6" height="9" fill="none" stroke="#d0d0d0" stroke-width="1"/></svg>
<svg class="i" style="left:545px;top:488px;" width="12" height="12" viewBox="0 0 12 12"><path d="M0.6 12 V0.6 H11.4 V12 M4.2 0.6 V5.4 H7.8 V0.6" fill="none" stroke="#d0d0d0" stroke-width="1"/></svg>
<div class="b " style="left:571px;top:493.6px;width:6px;height:0.9px;background:#cfcfcf;"></div>
<div class="b " style="left:581px;top:493.7px;width:79px;height:0.7px;background:#bdbdbd;"></div>
<div class="b " style="left:619px;top:489px;width:4.6px;height:11px;background:#bdbdbd;border-radius:1px;"></div>
<svg class="i" style="left:664px;top:490.5px;" width="7" height="7" viewBox="0 0 7 7"><path d="M3.5 0.4 V6.6 M0.4 3.5 H6.6" stroke="#cfcfcf" stroke-width="0.9"/></svg>
<span class="t " style="left:681.30px;top:489.70px;font-size:8.6px;line-height:10px;color:#dcdcdc;transform:scaleX(0.9130) rotate(0.02deg);-webkit-text-stroke:0.1px #dcdcdc;">100%</span>
</div>
</body></html>
